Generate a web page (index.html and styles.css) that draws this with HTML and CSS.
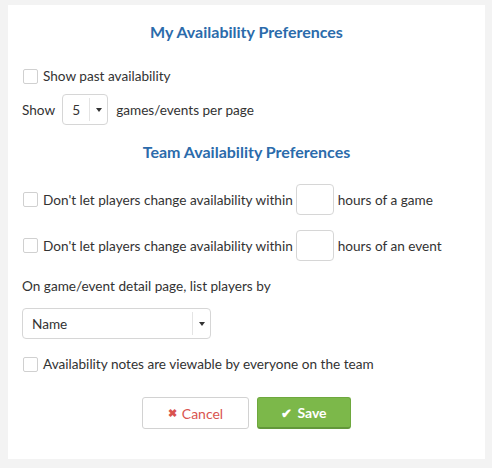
FILE: index.html
```html
<!DOCTYPE html>
<html>
<head>
<meta charset="utf-8">
<link rel="stylesheet" href="styles.css">
</head>
<body>
<div class="card">
  <h2 class="title">My Availability Preferences</h2>
  <label class="check-row first"><span class="box"></span>Show past availability</label>
  <div class="show-row">
    <span>Show</span>
    <div class="select small"><span class="val">5</span><span class="sep"></span><span class="caret"></span></div>
    <span>games/events per page</span>
  </div>
  <h2 class="title team">Team Availability Preferences</h2>
  <div class="hours-row">
    <span class="box"></span><span>Don't let players change availability within</span><span class="num"></span><span>hours of a game</span>
  </div>
  <div class="hours-row">
    <span class="box"></span><span>Don't let players change availability within</span><span class="num"></span><span>hours of an event</span>
  </div>
  <div class="list-label">On game/event detail page, list players by</div>
  <div class="select wide"><span class="val">Name</span><span class="sep"></span><span class="caret"></span></div>
  <label class="check-row notes"><span class="box"></span>Availability notes are viewable by everyone on the team</label>
  <div class="buttons">
    <button class="btn cancel"><span class="ico">&#10006;</span>Cancel</button>
    <button class="btn save"><span class="ico">&#10004;</span>Save</button>
  </div>
</div>
</body>
</html>
```
FILE: styles.css
```css
html, body { margin: 0; padding: 0; }
body {
  background: #f3f3f3;
  width: 492px;
  height: 468px;
  font-family: Lato, "Open Sans", sans-serif;
  font-size: 13.6px;
  color: #333;
  padding: 5px 0 0 8px;
  box-sizing: border-box;
}
.card {
  background: #fff;
  width: 477px;
  height: 454px;
  box-sizing: border-box;
  padding: 0 14px 0 14px;
  display: flex;
  flex-direction: column;
}
.title {
  margin: 0;
  text-align: center;
  font-size: 16px;
  font-weight: bold;
  color: #2b6bab;
  line-height: 20px;
  margin-top: 17px;
}
.title.team { margin-top: 17px; }
.box {
  width: 15px;
  height: 15px;
  border: 1px solid #d0d0d0;
  border-radius: 2px;
  box-sizing: border-box;
  display: inline-block;
  flex: none;
  margin-right: 5px;
}
.check-row {
  display: flex;
  align-items: center;
  padding-left: 1px;
  height: 16px;
}
.check-row.first { margin-top: 26px; }
.show-row {
  display: flex;
  align-items: center;
  margin-top: 10px;
  height: 31px;
}
.select {
  border: 1px solid #d6d6d6;
  border-radius: 4px;
  height: 31px;
  box-sizing: border-box;
  display: flex;
  align-items: center;
  position: relative;
}
.select.small { width: 46px; margin: 0 8px 0 7px; }
.select .val { padding-left: 9px; flex: 1; }
.select .sep { width: 1px; height: 23px; background: #e4e4e4; }
.select .caret {
  width: 0; height: 0;
  border-left: 3px solid transparent;
  border-right: 3px solid transparent;
  border-top: 4px solid #333;
  margin: 0 5px 0 6px;
}
.select.wide { width: 189px; margin-top: 13px; }
.hours-row {
  display: flex;
  align-items: center;
  padding-left: 1px;
  height: 31px;
}
.team + .hours-row { margin-top: 22px; }
.hours-row + .hours-row { margin-top: 15px; }
.num {
  width: 38px;
  height: 31px;
  border: 1px solid #d6d6d6;
  border-radius: 4px;
  box-sizing: border-box;
  margin: 0 4px 0 3px;
}
.list-label { margin-top: 16px; line-height: 18px; }
.check-row.notes { margin-top: 17px; }
.buttons {
  display: flex;
  justify-content: center;
  gap: 8px;
  margin-top: 25px;
}
.btn {
  height: 32px;
  border-radius: 3px;
  font-family: inherit;
  font-size: 14px;
  font-weight: bold;
  box-sizing: border-box;
  display: flex;
  align-items: center;
  justify-content: center;
  cursor: pointer;
}
.btn .ico { font-size: 11px; margin-right: 5px; }
.save .ico { font-size: 13px; }
.cancel {
  width: 107px;
  background: #fff;
  border: 1px solid #d2d2d2;
  color: #d9534f;
  font-weight: normal;
}
.cancel .ico { font-weight: bold; }
.save {
  width: 94px;
  background: #7cb84a;
  border: 1px solid #6ea83e;
  border-bottom: 2px solid #62973a;
  color: #fff;
}
```
